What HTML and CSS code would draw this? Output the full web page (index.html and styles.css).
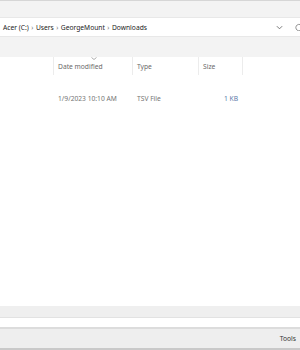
FILE: index.html
```html
<!DOCTYPE html>
<html>
<head>
    <title>Downloads</title>
    <meta charset="UTF-8">
    <link rel="stylesheet" href="styles.css">
</head>
<body>
    <div class="window">
        <div class="top-band"></div>

        <div class="address-bar">
            <div class="crumbs">
                <span>Acer (C:)</span>
                <span class="sep">&#8250;</span>
                <span>Users</span>
                <span class="sep">&#8250;</span>
                <span>GeorgeMount</span>
                <span class="sep">&#8250;</span>
                <span>Downloads</span>
            </div>
            <div class="address-icons">
                <svg class="chevron" viewBox="0 0 8 5">
                    <path d="M1 1l3 3 3-3"/>
                </svg>
                <svg class="refresh" viewBox="0 0 10 10">
                    <path d="M8 3A4 4 0 1 0 9 5"/>
                </svg>
            </div>
        </div>

        <div class="toolbar"></div>

        <div class="file-list">
            <div class="row header">
                <div class="col name"></div>
                <div class="col date">
                    <svg class="sort" viewBox="0 0 6 3">
                        <path d="M0.5 0.5l2.5 2 2.5-2"/>
                    </svg>
                    Date modified
                </div>
                <div class="col type">Type</div>
                <div class="col size">Size</div>
                <div class="col rest"></div>
            </div>

            <div class="row item">
                <div class="col name"></div>
                <div class="col date">1/9/2023 10:10 AM</div>
                <div class="col type">TSV File</div>
                <div class="col size num">1 KB</div>
                <div class="col rest"></div>
            </div>
        </div>

        <div class="status-band"></div>
        <div class="input-strip"></div>

        <div class="footer">
            <span>Tools</span>
        </div>
    </div>
</body>
</html>
```

FILE: styles.css
```css
* {
    margin: 0;
    padding: 0;
    box-sizing: border-box;
}

body {
    width: 300px;
    height: 350px;
    overflow: hidden;
    background: white;
    font-family: "Noto Sans", "Open Sans", sans-serif;
    font-size: 6.7px;
    color: #1b1b1b;
}

.window {
    display: flex;
    flex-direction: column;
    height: 350px;
}

.top-band {
    height: 17px;
    background: #f3f3f3;
    border-top: 1px solid #d6d6d6;
}

.address-bar {
    height: 20px;
    display: flex;
    align-items: center;
    justify-content: space-between;
    background: white;
    border-top: 1px solid #e8e8e8;
    border-bottom: 1px solid #e8e8e8;
    padding-left: 3px;
}

.crumbs {
    display: flex;
    align-items: center;
    gap: 2.5px;
}

.crumbs .sep {
    color: #777;
}

.address-icons {
    display: flex;
    align-items: center;
    gap: 12px;
    margin-right: -3px;
}

.chevron {
    flex-shrink: 0;
    width: 7px;
    height: 5px;
    fill: none;
    stroke: #666;
    stroke-width: 1;
}

.refresh {
    flex-shrink: 0;
    width: 8px;
    height: 8px;
    fill: none;
    stroke: #777;
    stroke-width: 1;
}

.toolbar {
    height: 20px;
    background: #f3f3f3;
}

.file-list {
    flex: 1;
}

.row {
    display: flex;
}

.header {
    height: 18px;
    color: #6a6a6a;
}

.header .col {
    border-right: 1px solid #ececec;
    position: relative;
}

.header .rest {
    border-right: none;
}

.col {
    display: flex;
    align-items: center;
    padding-left: 4px;
}

.name { width: 54px; }
.date { width: 79px; }
.type { width: 66px; }
.size { width: 44px; }
.rest { flex: 1; }

.sort {
    position: absolute;
    top: 0;
    left: 37px;
    width: 6px;
    height: 3px;
    fill: none;
    stroke: #999;
    stroke-width: 0.8;
}

.item {
    height: 16px;
    margin-top: 15px;
    color: #747474;
}

.item .num {
    justify-content: flex-end;
    padding-right: 5px;
    color: #5a78a8;
}

.status-band {
    height: 12px;
    background: #efefef;
    border-bottom: 1px solid #e2e2e2;
}

.input-strip {
    height: 11px;
    background: white;
    border-bottom: 2px solid #dcdcdc;
}

.footer {
    height: 21px;
    display: flex;
    align-items: center;
    justify-content: flex-end;
    padding-right: 4px;
    background: #eeeeee;
    border-bottom: 2px solid #c9c9c9;
    color: #333;
}
```
